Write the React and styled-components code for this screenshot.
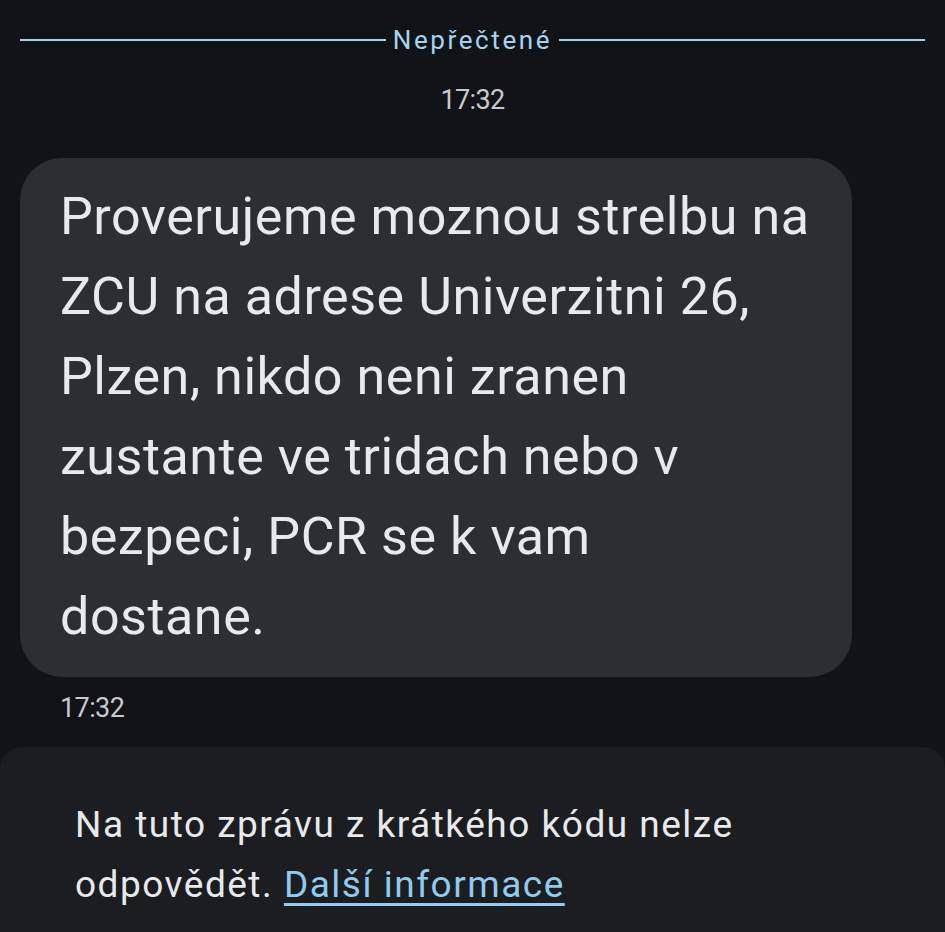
import React from "react";
import styled, { createGlobalStyle } from "styled-components";

const Global = createGlobalStyle`
  html, body { margin: 0; padding: 0; background: #111316; }
  body { font-family: Roboto, "Noto Sans", sans-serif; }
`;

const Page = styled.div`
  width: 945px;
  height: 932px;
  background: #111316;
  display: flex;
  flex-direction: column;
  overflow: hidden;
`;

const DividerRow = styled.div`
  display: flex;
  align-items: center;
  gap: 7px;
  margin-top: 24px;
  padding: 0 20px;
  height: 32px;
`;

const Line = styled.div`
  flex: 1;
  height: 2px;
  background: #a3d1ee;
`;

const DividerLabel = styled.span`
  font-size: 26px;
  line-height: 32px;
  color: #a6d3f0;
  letter-spacing: 2.6px;
`;

const TimeStamp = styled.div`
  font-size: 27px;
  letter-spacing: -0.6px;
  line-height: 30px;
  color: #c9cacd;
  text-align: ${(p) => (p.$center ? "center" : "left")};
  margin: ${(p) => (p.$center ? "29px 0 0 0" : "16px 0 0 60px")};
`;

const Bubble = styled.div`
  margin: 43px 0 0 20px;
  width: 832px;
  box-sizing: border-box;
  background: #2b2e32;
  border-radius: 42px;
  padding: 19px 30px 20px 40px;
  font-size: 52px;
  letter-spacing: 0.55px;
  line-height: 80px;
  color: #e8e9eb;
`;

const InfoPanel = styled.div`
  margin-top: 24px;
  flex: 1;
  background: #1b1d21;
  border-radius: 22px 22px 0 0;
  padding: 48px 40px 0 75px;
  font-size: 37px;
  letter-spacing: 1.5px;
  line-height: 60px;
  color: #e8e9eb;
`;

const Link = styled.a`
  color: #8fcbef;
  text-decoration: underline;
  text-decoration-thickness: 3px;
  text-underline-offset: 6px;
`;

export default function App() {
  return (
    <Page>
      <Global />
      <DividerRow>
        <Line />
        <DividerLabel>Nepřečtené</DividerLabel>
        <Line />
      </DividerRow>
      <TimeStamp $center>17:32</TimeStamp>
      <Bubble>
        Proverujeme moznou strelbu na
        <br />
        ZCU na adrese Univerzitni 26,
        <br />
        Plzen, nikdo neni zranen
        <br />
        zustante ve tridach nebo v
        <br />
        bezpeci, PCR se k vam
        <br />
        dostane.
      </Bubble>
      <TimeStamp>17:32</TimeStamp>
      <InfoPanel>
        Na tuto zprávu z krátkého kódu nelze
        <br />
        odpovědět. <Link href="#">Další informace</Link>
      </InfoPanel>
    </Page>
  );
}
